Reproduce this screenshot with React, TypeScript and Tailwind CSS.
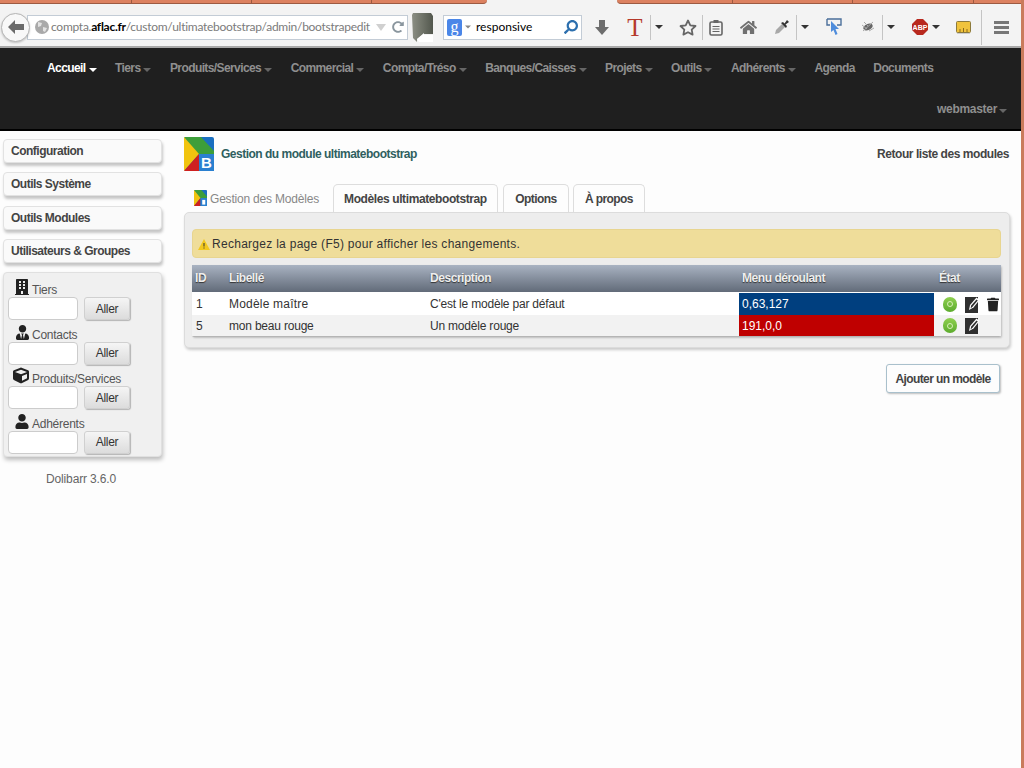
import type { ReactNode } from "react";
import { FaBuilding, FaCube, FaHome, FaRedoAlt, FaSearch, FaTrash, FaUser, FaUserTie } from "react-icons/fa";

const menu = [
  { label: "Accueil", active: true },
  { label: "Tiers" },
  { label: "Produits/Services" },
  { label: "Commercial" },
  { label: "Compta/Tréso" },
  { label: "Banques/Caisses" },
  { label: "Projets" },
  { label: "Outils" },
  { label: "Adhérents" },
  { label: "Agenda", plain: true },
  { label: "Documents", plain: true },
];

function Caret({ className }: { className: string }) {
  return <span className={`inline-block h-0 w-0 border-x-[4px] border-t-[4px] border-x-transparent ${className}`} />;
}

function Slot({ className, children }: { className: string; children: ReactNode }) {
  return <div className={`flex shrink-0 items-center justify-center ${className}`}>{children}</div>;
}

function Sep({ className }: { className: string }) {
  return <div className={`h-[25px] w-px shrink-0 bg-[#c4c4c4] ${className}`} />;
}

function Logo({ size, withLetter }: { size: string; withLetter?: boolean }) {
  return (
    <svg viewBox="0 0 30 34" className={`shrink-0 ${size}`} preserveAspectRatio="none">
      <rect width="30" height="34" rx="2" fill="#1a6fc0" />
      <path d="M0 0H17L30 14V19H15Z" fill="#3d9e3a" />
      <path d="M0 0L15 17L0 34Z" fill="#f1c40f" />
      <path d="M15 17L0 34H15V17Z" fill="#cf2020" />
      <path d="M15 17H30V34H15Z" fill="#2a80d0" />
      {withLetter ? (
        <text x="22.5" y="31" textAnchor="middle" fontSize="15" fontWeight="700" fill="#fff" fontFamily="Liberation Sans">
          B
        </text>
      ) : (
        <rect x="19" y="21" width="7" height="10" fill="#fff" />
      )}
    </svg>
  );
}

function Toolbar() {
  return (
    <div className="h-[48px] border-b-2 border-[#a9a9a9] bg-[#f3f3f3]">
      <div className="flex h-[4px]">
        <div className="flex w-[487px] rounded-br-[5px] border-b border-[#9c5a42] bg-[#dc8160]">
          <div className="w-[132px] border-r border-[#9c5a42]" />
          <div className="w-[120px] border-r border-[#9c5a42]" />
          <div className="w-[120px] border-r border-[#9c5a42]" />
        </div>
        <div className="w-[130px]" />
        <div className="flex flex-1 rounded-bl-[5px] border-b border-[#9c5a42] bg-[#dc8160]">
          <div className="w-[116px] border-r border-[#9c5a42]" />
          <div className="w-[120px] border-r border-[#9c5a42]" />
          <div className="w-[121px] border-r border-[#9c5a42]" />
        </div>
      </div>
      <div className="flex h-[42px] items-center pl-[1px] pt-[4px]">
        <div className="z-10 flex h-[29px] w-[29px] shrink-0 items-center justify-center rounded-full border border-[#b5b5b5] bg-[#f8f8f8] shadow-[0_1px_2px_rgba(0,0,0,0.2)]">
          <svg viewBox="0 0 16 14" className="h-[14px] w-[16px]">
            <path d="M7 0L0 7L7 14V10H16V4H7Z" fill="#6b6b6b" />
          </svg>
        </div>
        <div className="ml-[-3px] flex h-[25px] w-[381px] shrink-0 items-center overflow-hidden border border-[#c3ccd6] bg-white pl-[6px]">
          <svg viewBox="0 0 14 14" className="ml-[1px] h-[14px] w-[14px] shrink-0">
            <circle cx="7" cy="7" r="7" fill="#a9a9a9" />
            <path d="M3 2L7 3L6 6L3 7ZM8 7L12 8L10 12L8 11Z" fill="#e2e2e2" />
          </svg>
          <div className="ml-[2px] w-[320px] shrink-0 whitespace-nowrap font-['Lato',sans-serif] text-[12px] tracking-[-0.27px] text-[#7b7b7b]">
            compta.<span className="font-bold text-black">aflac.fr</span>/custom/ultimatebootstrap/admin/bootstrapedit
          </div>
          <Caret className="ml-[5px] border-x-[5px] border-t-[7px] border-t-[#d0d0d0]" />
          <FaRedoAlt className="ml-[6px] h-[12px] w-[12px] text-[#8a969e]" />
        </div>
        <svg viewBox="0 0 22 29" className="ml-[3px] h-[29px] w-[22px] shrink-0">
          <defs>
            <linearGradient id="flag" x1="0" x2="1" y1="0" y2="0">
              <stop offset="0" stopColor="#8c8f84" />
              <stop offset="1" stopColor="#52574d" />
            </linearGradient>
          </defs>
          <path d="M2 0H20L22 3V21H13L6 26V29L2 25L1 2Z" fill="url(#flag)" />
          <path d="M6 26L13 20V22H22V29H8Z" fill="#fff" />
        </svg>
        <div className="ml-[10px] flex h-[25px] w-[139px] shrink-0 items-center border border-[#c3ccd6] bg-white pl-[3px]">
          <div className="flex h-[17px] w-[15px] shrink-0 items-center justify-center rounded-[2px] bg-[#4a86e8] font-['Liberation_Serif',serif] text-[16px] leading-none text-white">
            g
          </div>
          <Caret className="ml-[2px] scale-75 border-t-[#888]" />
          <span className="ml-[4px] font-['Lato',sans-serif] text-[12px] text-black">responsive</span>
          <FaSearch className="ml-auto mr-[3px] h-[14px] w-[14px] -scale-x-100 text-[#2c6fae]" />
        </div>
        <Slot className="ml-[8px] w-[24px]">
          <svg viewBox="0 0 14 15" className="h-[15px] w-[14px]">
            <path d="M4 0H10V7H14L7 15L0 7H4Z" fill="#6d6d6d" />
          </svg>
        </Slot>
        <Slot className="ml-[9px] w-[24px]">
          <span className="font-['Liberation_Serif',serif] text-[25px] leading-none text-[#b5392b]">T</span>
        </Slot>
        <Sep className="ml-[3px]" />
        <Slot className="ml-[2px] w-[12px]">
          <Caret className="border-t-[#333]" />
        </Slot>
        <Slot className="ml-[11px] w-[24px]">
          <svg viewBox="0 0 18 17" className="h-[17px] w-[18px]">
            <path d="M9 1.5L11.3 6.3L16.5 7L12.7 10.6L13.6 15.6L9 13.2L4.4 15.6L5.3 10.6L1.5 7L6.7 6.3Z" fill="none" stroke="#666" strokeWidth="1.8" strokeLinejoin="round" />
          </svg>
        </Slot>
        <Sep className="ml-[2px]" />
        <Slot className="ml-[1px] w-[24px]">
          <svg viewBox="0 0 14 17" className="h-[17px] w-[14px]">
            <rect x="1" y="3" width="12" height="13" rx="1.5" fill="none" stroke="#666" strokeWidth="1.6" />
            <rect x="4.5" y="1" width="5" height="3" fill="#666" />
            <path d="M3.5 7.5H10.5M3.5 10H10.5M3.5 12.5H10.5" stroke="#666" strokeWidth="1.2" />
          </svg>
        </Slot>
        <Slot className="ml-[8px] w-[24px]">
          <FaHome className="h-[17px] w-[17px] text-[#707070]" />
        </Slot>
        <Slot className="ml-[10px] w-[24px]">
          <svg viewBox="0 0 16 16" className="h-[16px] w-[16px]">
            <path d="M1 15L2 11L8 5L11 8L5 14Z" fill="#a8a8a8" />
            <path d="M7 4L12 9L13 7L11.5 5.5L15 3L13 1L10.5 4.5L9 3Z" fill="#333" />
          </svg>
        </Slot>
        <Sep className="ml-[2px]" />
        <Slot className="ml-[2px] w-[12px]">
          <Caret className="border-t-[#333]" />
        </Slot>
        <Slot className="ml-[11px] w-[24px]">
          <svg viewBox="0 0 16 18" className="h-[18px] w-[16px]">
            <path d="M1 1H15V7H11" fill="none" stroke="#4b6f9b" strokeWidth="1.4" />
            <path d="M1 1V7H4" fill="none" stroke="#4b6f9b" strokeWidth="1.4" />
            <path d="M5 3L13 11H9.5L11.5 16L9.5 17L7.5 12L5 14Z" fill="#4f8ddc" />
          </svg>
        </Slot>
        <Slot className="ml-[10px] w-[24px]">
          <svg viewBox="0 0 16 14" className="h-[14px] w-[16px]">
            <ellipse cx="8" cy="7" rx="5" ry="3" fill="#666" transform="rotate(-25 8 7)" />
            <path d="M3 11L13 2M2 5L7 9M9 11L14 8M4 2L8 6" stroke="#aaa" strokeWidth="1" />
          </svg>
        </Slot>
        <Sep className="ml-[2px]" />
        <Slot className="ml-[2px] w-[12px]">
          <Caret className="border-t-[#333]" />
        </Slot>
        <Slot className="ml-[11px] w-[24px]">
          <svg viewBox="0 0 16 16" className="h-[16px] w-[16px]">
            <path d="M5 0H11L16 5V11L11 16H5L0 11V5Z" fill="#b8281e" />
            <text x="8" y="11" textAnchor="middle" fontSize="7" fontWeight="700" fill="#fff" fontFamily="Liberation Sans">
              ABP
            </text>
          </svg>
        </Slot>
        <Slot className="w-[8px]">
          <Caret className="border-t-[#333]" />
        </Slot>
        <Slot className="ml-[11px] w-[24px]">
          <svg viewBox="0 0 15 13" className="h-[13px] w-[15px]">
            <rect x="0.5" y="0.5" width="14" height="11" rx="1" fill="#f0c33c" stroke="#8c7a3c" />
            <path d="M4 11V8M7.5 11V7M11 11V8" stroke="#8c6a1c" />
            <rect x="1" y="12" width="13" height="1" fill="#ccc" />
          </svg>
        </Slot>
        <Sep className="ml-[6px] h-[35px]" />
        <Slot className="ml-[7px] w-[24px]">
          <div className="flex w-[15px] flex-col gap-[2px]">
            <div className="h-[3px] bg-[#777]" />
            <div className="h-[3px] bg-[#777]" />
            <div className="h-[3px] bg-[#777]" />
          </div>
        </Slot>
      </div>
    </div>
  );
}

function TopMenu() {
  return (
    <nav className="h-[83px] border-b-2 border-black bg-[#1f1f1f] pl-[47px] pr-[14px] pt-[12px] text-[12px] font-bold">
      <div className="flex h-[16px] items-center gap-[18.5px]">
        {menu.map((item) => (
          <span key={item.label} className="flex items-center whitespace-nowrap">
            <span className={`tracking-[-0.6px] ${item.active ? "text-white" : "text-[#8f8f8f]"}`}>{item.label}</span>
            {!item.plain && <Caret className={`ml-[3px] mt-[3px] ${item.active ? "border-t-white" : "border-t-[#666]"}`} />}
          </span>
        ))}
      </div>
      <div className="mt-[25px] flex h-[16px] items-center justify-end">
        <span className="tracking-[-0.3px] text-[#8f8f8f]">webmaster</span>
        <Caret className="ml-[2px] mt-[3px] border-t-[#666]" />
      </div>
    </nav>
  );
}

function SideButton({ label }: { label: string }) {
  return (
    <div className="flex h-[24px] items-center rounded-[4px] border border-[#e2e2e2] bg-[#fafafa] pl-[7px] text-[12px] font-bold tracking-[-0.5px] text-[#444] shadow-[1px_3px_3px_rgba(0,0,0,0.22)]">
      {label}
    </div>
  );
}

function SearchBlock({ icon, label }: { icon: ReactNode; label: string }) {
  return (
    <div>
      <div className="flex h-[21px] items-end text-[12px] leading-[14px] tracking-[-0.25px] text-[#555]">
        <span className="flex w-[21px] items-end justify-end pb-[2px] text-[#222]">{icon}</span>
        <span className="ml-[3px]">{label}</span>
      </div>
      <div className="flex h-[23.5px] items-center gap-[6px]">
        <div className="h-[23px] w-[70px] rounded-[4px] border border-[#ccc] bg-white" />
        <div className="flex h-[23px] w-[46px] items-center justify-center rounded-[3px] border border-[#d0d0d0] bg-gradient-to-b from-[#f5f5f5] to-[#dcdcdc] text-[12px] tracking-[-0.3px] text-[#333] shadow-[1px_1px_1px_rgba(0,0,0,0.25)]">
          Aller
        </div>
      </div>
    </div>
  );
}

function Sidebar() {
  return (
    <aside className="ml-[3px] w-[159px] shrink-0 pt-[7px]">
      <div className="flex flex-col gap-[9.3px] pt-[1px]">
        <SideButton label="Configuration" />
        <SideButton label="Outils Système" />
        <SideButton label="Outils Modules" />
        <SideButton label="Utilisateurs & Groupes" />
      </div>
      <div className="mt-[9.6px] h-[185px] rounded-[4px] border border-[#e0e0e0] bg-[#f0f0f0] pl-[4px] pt-[2.6px] shadow-[1px_3px_4px_rgba(0,0,0,0.25)]">
        <SearchBlock icon={<FaBuilding className="h-[16px] w-[14px]" />} label="Tiers" />
        <SearchBlock icon={<FaUserTie className="h-[15px] w-[13px]" />} label="Contacts" />
        <SearchBlock icon={<FaCube className="h-[17px] w-[16px]" />} label="Produits/Services" />
        <SearchBlock icon={<FaUser className="h-[15px] w-[14px]" />} label="Adhérents" />
      </div>
      <div className="mt-[13px] pr-[3px] text-center text-[12px] tracking-[-0.15px] text-[#666]">Dolibarr 3.6.0</div>
    </aside>
  );
}

function EditIcon() {
  return (
    <svg viewBox="0 0 15 17" className="h-[17px] w-[15px] shrink-0">
      <rect y="1" width="13" height="16" fill="#2f2f2f" />
      <path d="M4 14L5 9L11.5 1.5L14.5 4L8.5 11.5Z" fill="#fff" />
      <path d="M5.5 12.5L6.2 9.5L11.5 3.5L12.7 4.5L7.5 10.8Z" fill="#2f2f2f" />
    </svg>
  );
}

function StatusDot() {
  return (
    <div className="flex h-[15px] w-[14px] items-center justify-center rounded-full bg-gradient-to-b from-[#8fd04f] to-[#5cab2d]">
      <div className="h-[6px] w-[6px] rounded-full border border-[#d8f0b8]" />
    </div>
  );
}

function ModelRow({
  id,
  label,
  desc,
  color,
  swatch,
  rowBg,
  trash,
  labelTracking,
}: {
  id: string;
  label: string;
  desc: string;
  color: string;
  swatch: string;
  rowBg: string;
  trash?: boolean;
  labelTracking: string;
}) {
  return (
    <div className={`grid grid-cols-[33px_201px_313px_195px_67px] items-center text-[12px] text-[#333] ${rowBg}`}>
      <div className="pl-[4px]">{id}</div>
      <div className={`pl-[4px] ${labelTracking}`}>{label}</div>
      <div className="pl-[4px] tracking-[-0.2px]">{desc}</div>
      <div className={`flex h-full items-center pl-[3px] text-white ${swatch}`}>{color}</div>
      <div className="flex items-center pl-[9px]">
        <StatusDot />
        <div className="ml-[8px]">
          <EditIcon />
        </div>
        {trash && <FaTrash className="ml-[7px] h-[15px] w-[12px] text-[#222]" />}
      </div>
    </div>
  );
}

function MainArea() {
  return (
    <main className="ml-[22px] w-[826px] shrink-0 pt-[6px]">
      <div className="flex h-[34px] items-center justify-between pr-[1px]">
        <div className="flex items-center">
          <Logo size="h-[34px] w-[30px]" withLetter />
          <span className="ml-[7px] text-[12px] font-bold tracking-[-0.5px] text-[#2f5f5f]">Gestion du module ultimatebootstrap</span>
        </div>
        <span className="text-[12px] font-bold tracking-[-0.45px] text-[#444]">Retour liste des modules</span>
      </div>
      <div className="relative z-10 mt-[13px] flex h-[28px] items-end text-[12px]">
        <div className="flex h-full items-center pl-[10px]">
          <Logo size="h-[16px] w-[13px]" />
          <span className="ml-[3px] mt-[1px] tracking-[-0.2px] text-[#888]">Gestion des Modèles</span>
        </div>
        <div className="ml-[14px] flex h-full w-[165px] items-center justify-center rounded-t-[5px] border border-b-0 border-[#ddd] bg-[#fdfdfd] font-bold tracking-[-0.4px] text-[#444]">
          Modèles ultimatebootstrap
        </div>
        <div className="ml-[5px] flex h-full w-[66px] items-center justify-center rounded-t-[5px] border border-b-0 border-[#ddd] bg-[#fdfdfd] font-bold tracking-[-0.6px] text-[#444]">
          Options
        </div>
        <div className="ml-[4px] flex h-full w-[72px] items-center justify-center rounded-t-[5px] border border-b-0 border-[#ddd] bg-[#fdfdfd] font-bold tracking-[-0.6px] text-[#444]">
          À propos
        </div>
      </div>
      <div className="h-[136px] rounded-[5px] border border-[#dcdcdc] bg-[#ededed] pl-[7px] pr-[8px] pt-[16px] shadow-[1px_2px_3px_rgba(0,0,0,0.2)]">
        <div className="flex h-[29px] items-center rounded-[4px] border border-[#e8d590] bg-[#efdd9a] pl-[5px] pt-[1px] text-[12px] text-[#333]">
          <svg viewBox="0 0 12 11" className="h-[11px] w-[12px]">
            <path d="M6 0L12 11H0Z" fill="#f2c81e" />
            <path d="M5.5 4H6.5V7.5H5.5ZM5.5 8.5H6.5V9.5H5.5Z" fill="#333" />
          </svg>
          <span className="ml-[2px] tracking-[0.28px]">Rechargez la page (F5) pour afficher les changements.</span>
        </div>
        <div className="mt-[7px] rounded-[2px] border-b border-[#b5b5b5] bg-white shadow-[1px_1px_2px_rgba(0,0,0,0.2)]">
          <div className="mb-[1px] grid h-[27px] grid-cols-[33px_201px_313px_195px_67px] items-center bg-gradient-to-b from-[#a9b3c2] to-[#626b79] pb-[1px] text-[12px] font-bold tracking-[-0.45px] text-[#eeeeee] [text-shadow:0_1px_1px_#333]">
            <div className="pl-[3px]">ID</div>
            <div className="pl-[4px]">Libellé</div>
            <div className="pl-[4px]">Description</div>
            <div className="pl-[3px]">Menu déroulant</div>
            <div className="pl-[5px]">État</div>
          </div>
          <ModelRow
            id="1"
            label="Modèle maître"
            desc="C'est le modèle par défaut"
            color="0,63,127"
            swatch="bg-[#003f7f]"
            rowBg="h-[22px] bg-white"
            labelTracking="tracking-[0.2px]"
            trash
          />
          <ModelRow
            id="5"
            label="mon beau rouge"
            desc="Un modèle rouge"
            color="191,0,0"
            swatch="bg-[#bf0000]"
            rowBg="h-[21px] bg-[#f2f2f2]"
            labelTracking="tracking-[-0.2px]"
          />
        </div>
      </div>
      <div className="mt-[16px] flex justify-end pr-[10px]">
        <div className="flex h-[29px] w-[114px] items-center justify-center rounded-[3px] border border-[#a9c0cc] bg-[#fdfdfd] text-[12px] font-bold tracking-[-0.6px] text-[#444] shadow-[1px_1px_2px_rgba(0,0,0,0.25)]">
          Ajouter un modèle
        </div>
      </div>
    </main>
  );
}

export default function App() {
  return (
    <div className="flex h-[768px] w-[1024px] overflow-hidden bg-[#fdfdfd] font-['Liberation_Sans',Arial,sans-serif]">
      <div className="w-[1021px] shrink-0">
        <Toolbar />
        <TopMenu />
        <div className="flex">
          <Sidebar />
          <MainArea />
        </div>
      </div>
      <div className="w-[3px] shrink-0 bg-[#c97b5c]" />
    </div>
  );
}
